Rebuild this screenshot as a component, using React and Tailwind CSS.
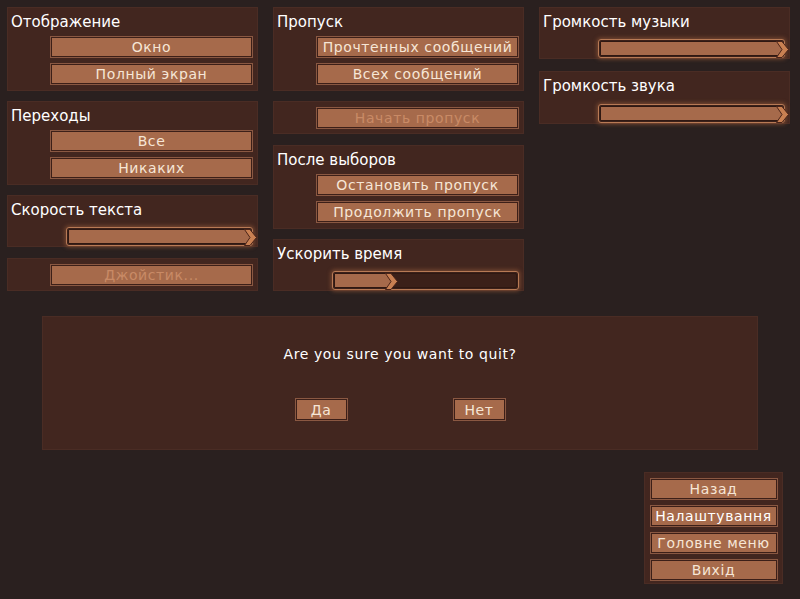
import React from "react";

const font = { fontFamily: '"DejaVu Sans", "Liberation Sans", sans-serif' };

function Btn({ children, disabled, w = "w-[203px]", h = "h-[22px]" }) {
  return (
    <div className={`${w} ${h} border border-[#8a5842] bg-[#3c1f18] p-px flex`}>
      <div
        className={`flex-1 bg-[#a66a4b] flex items-center justify-center text-[14px] leading-none tracking-[0.6px] ${
          disabled ? "text-[#c98a66]" : "text-[#f6e6d6]"
        }`}
      >
        {children}
      </div>
    </div>
  );
}

function Slider({ pct = 100 }) {
  return (
    <div className="w-[187px] h-[19px] rounded-[3px] border border-[#b87a55] shadow-[0_0_4px_1px_#7d4c33] bg-[#3b2019] p-px flex">
      <div className="flex-1 rounded-[2px] border border-[#2f1812] bg-[#3b2019] relative">
        <div className="h-full bg-[#a66a4b] relative" style={{ width: `${pct}%` }}>
          <div className="absolute -top-px right-[-8px]">
            <svg width="14" height="17" viewBox="0 0 14 17">
              <path d="M0.5 0.5 L6 0.5 L12.5 8.5 L6 16.5 L0.5 16.5 L6 8.5 Z" fill="#c98052" stroke="#4a2419" strokeWidth="1" />
            </svg>
          </div>
        </div>
      </div>
    </div>
  );
}

function Panel({ title, children, h }) {
  return (
    <div className={`${h} bg-[#42261f] border border-[#4a2c24] flex flex-col pt-[5px] px-[3px]`}>
      {title && (
        <div className="h-[23px] text-[15px] leading-[18px] text-white">{title}</div>
      )}
      <div className="flex flex-col items-end gap-[5px] pr-px">{children}</div>
    </div>
  );
}

export default function App() {
  return (
    <div className="w-[800px] h-[599px] bg-[#2a201f] flex flex-col overflow-hidden" style={font}>
      <div className="flex items-start gap-[15px] pl-[7px] pt-[7px]">
        {/* Column 1 */}
        <div className="w-[251px] flex flex-col">
          <Panel title="Отображение" h="h-[84px]">
            <Btn>Окно</Btn>
            <Btn>Полный экран</Btn>
          </Panel>
          <div className="h-[10px]" />
          <Panel title="Переходы" h="h-[84px]">
            <Btn>Все</Btn>
            <Btn>Никаких</Btn>
          </Panel>
          <div className="h-[10px]" />
          <Panel title="Скорость текста" h="h-[52px]">
            <div className="mt-[4px]"><Slider pct={100} /></div>
          </Panel>
          <div className="h-[11px]" />
          <Panel h="h-[33px]">
            <Btn disabled>Джойстик...</Btn>
          </Panel>
        </div>
        {/* Column 2 */}
        <div className="w-[251px] flex flex-col">
          <Panel title="Пропуск" h="h-[84px]">
            <Btn>Прочтенных сообщений</Btn>
            <Btn>Всех сообщений</Btn>
          </Panel>
          <div className="h-[10px]" />
          <Panel h="h-[33px]">
            <Btn disabled>Начать пропуск</Btn>
          </Panel>
          <div className="h-[11px]" />
          <Panel title="После выборов" h="h-[84px]">
            <Btn>Остановить пропуск</Btn>
            <Btn>Продолжить пропуск</Btn>
          </Panel>
          <div className="h-[10px]" />
          <Panel title="Ускорить время" h="h-[52px]">
            <div className="mt-[4px]"><Slider pct={31} /></div>
          </Panel>
        </div>
        {/* Column 3 */}
        <div className="w-[251px] flex flex-col">
          <Panel title="Громкость музыки" h="h-[52px]">
            <div className="mt-[5px]"><Slider pct={100} /></div>
          </Panel>
          <div className="h-[12px]" />
          <Panel title="Громкость звука" h="h-[53px]">
            <div className="mt-[5px]"><Slider pct={100} /></div>
          </Panel>
        </div>
      </div>

      {/* Dialog */}
      <div className="ml-[42px] mt-[25px] w-[716px] h-[134px] bg-[#42261f] border border-[#4a2c24] flex flex-col items-center">
        <div className="mt-[27px] text-[14px] leading-[20px] text-white tracking-[0.6px]">
          Are you sure you want to quit?
        </div>
        <div className="mt-[34px] flex gap-[105px]">
          <Btn w="w-[53px]" h="h-[23px]">Да</Btn>
          <Btn w="w-[53px]" h="h-[23px]">Нет</Btn>
        </div>
      </div>

      {/* Bottom nav */}
      <div className="self-end mr-[17px] mt-[22px] w-[139px] h-[112px] bg-[#42261f] border border-[#4a2c24] flex flex-col items-center pt-[5px] gap-[5px]">
        <Btn w="w-[128px]">Назад</Btn>
        <Btn w="w-[128px]"><span className="text-white">Налаштування</span></Btn>
        <Btn w="w-[128px]">Головне меню</Btn>
        <Btn w="w-[128px]">Вихід</Btn>
      </div>
    </div>
  );
}
